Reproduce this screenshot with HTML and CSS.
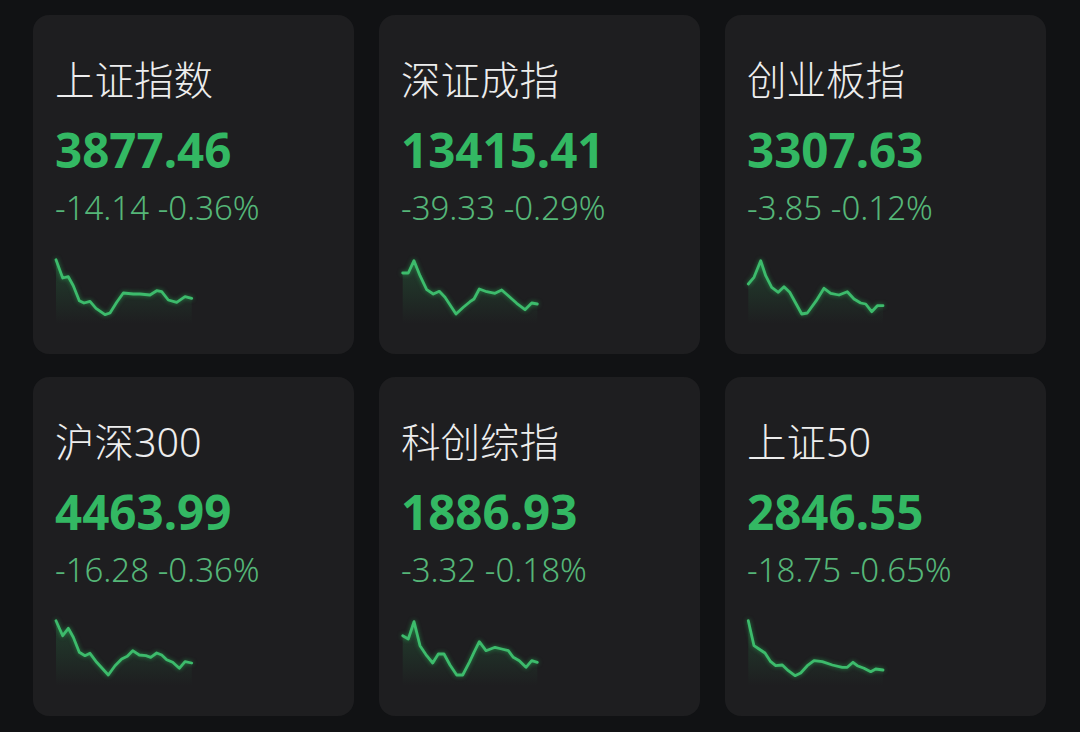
FILE: index.html
```html
<!DOCTYPE html>
<html lang="zh-CN">
<head>
  <meta charset="UTF-8">
  <title>指数行情</title>
  <link rel="stylesheet" href="styles.css">
</head>
<body>
  <div class="grid">

    <div class="card">
      <div class="name">上证指数</div>
      <div class="price">3877.46</div>
      <div class="change">-14.14 -0.36%</div>
      <svg class="spark" viewBox="0 0 150 75">
        <defs>
          <linearGradient id="g1" x1="0" y1="0" x2="0" y2="1">
            <stop offset="0" stop-color="#2fb35e" stop-opacity="0.22"/>
            <stop offset="1" stop-color="#2fb35e" stop-opacity="0"/>
          </linearGradient>
        </defs>
        <polygon fill="url(#g1)" points="1,10.7 7.7,29 13.3,27.7 18.3,36.7 24.3,51.7 29,54 35,52.3 41,59.3 50,65.7 55,64 61.7,53.3 68.3,44 78.3,45 85,45 95,46 101.7,41.7 106.7,42.7 113.3,51 121.7,53.3 130,47.7 136.7,49.3 136.7,75 1,75"/>
        <polyline class="line" points="1,10.7 7.7,29 13.3,27.7 18.3,36.7 24.3,51.7 29,54 35,52.3 41,59.3 50,65.7 55,64 61.7,53.3 68.3,44 78.3,45 85,45 95,46 101.7,41.7 106.7,42.7 113.3,51 121.7,53.3 130,47.7 136.7,49.3"/>
      </svg>
    </div>

    <div class="card">
      <div class="name">深证成指</div>
      <div class="price">13415.41</div>
      <div class="change">-39.33 -0.29%</div>
      <svg class="spark" viewBox="0 0 150 75">
        <defs>
          <linearGradient id="g2" x1="0" y1="0" x2="0" y2="1">
            <stop offset="0" stop-color="#2fb35e" stop-opacity="0.22"/>
            <stop offset="1" stop-color="#2fb35e" stop-opacity="0"/>
          </linearGradient>
        </defs>
        <polygon fill="url(#g2)" points="1.7,24 7.3,24 13,11.7 19,26.7 25.7,40.7 32.3,45 38.3,42.3 44,48.3 55,65 62.3,58.3 69,52.7 73,50 78.3,40 85.7,42.7 94,44.3 100.7,41 107.3,46.7 115.7,54.3 124,60.7 130.7,54 136.3,55 136.3,75 1.7,75"/>
        <polyline class="line" points="1.7,24 7.3,24 13,11.7 19,26.7 25.7,40.7 32.3,45 38.3,42.3 44,48.3 55,65 62.3,58.3 69,52.7 73,50 78.3,40 85.7,42.7 94,44.3 100.7,41 107.3,46.7 115.7,54.3 124,60.7 130.7,54 136.3,55"/>
      </svg>
    </div>

    <div class="card">
      <div class="name">创业板指</div>
      <div class="price">3307.63</div>
      <div class="change">-3.85 -0.12%</div>
      <svg class="spark" viewBox="0 0 150 75">
        <defs>
          <linearGradient id="g3" x1="0" y1="0" x2="0" y2="1">
            <stop offset="0" stop-color="#2fb35e" stop-opacity="0.22"/>
            <stop offset="1" stop-color="#2fb35e" stop-opacity="0"/>
          </linearGradient>
        </defs>
        <polygon fill="url(#g3)" points="1.3,35 7,28.3 13.7,11.7 18.7,26.7 24.7,38.3 31.3,43.3 37,37.7 42.7,43.3 54.7,65 60.3,64 69.3,51.7 77,39.3 83.7,44.3 92,46 100.3,42.7 107,50 113.7,54 118.7,55 124.7,62.7 130.3,56.7 136,56.7 136,75 1.3,75"/>
        <polyline class="line" points="1.3,35 7,28.3 13.7,11.7 18.7,26.7 24.7,38.3 31.3,43.3 37,37.7 42.7,43.3 54.7,65 60.3,64 69.3,51.7 77,39.3 83.7,44.3 92,46 100.3,42.7 107,50 113.7,54 118.7,55 124.7,62.7 130.3,56.7 136,56.7"/>
      </svg>
    </div>

    <div class="card">
      <div class="name">沪深300</div>
      <div class="price">4463.99</div>
      <div class="change">-16.28 -0.36%</div>
      <svg class="spark" viewBox="0 0 150 75">
        <defs>
          <linearGradient id="g4" x1="0" y1="0" x2="0" y2="1">
            <stop offset="0" stop-color="#2fb35e" stop-opacity="0.22"/>
            <stop offset="1" stop-color="#2fb35e" stop-opacity="0"/>
          </linearGradient>
        </defs>
        <polygon fill="url(#g4)" points="1,9.7 7.7,24.7 13.3,17.3 18.3,26.3 24.3,41.3 30,44.7 35,42.3 41.7,51.3 53.3,64 60,54.7 66.7,48 72.3,45.3 77.7,39.7 84.3,44 91,44.7 95.7,46.3 101.7,42 106.7,44 111.7,48.7 117.7,51.3 124.3,57.3 130,50.7 136.7,52 136.7,75 1,75"/>
        <polyline class="line" points="1,9.7 7.7,24.7 13.3,17.3 18.3,26.3 24.3,41.3 30,44.7 35,42.3 41.7,51.3 53.3,64 60,54.7 66.7,48 72.3,45.3 77.7,39.7 84.3,44 91,44.7 95.7,46.3 101.7,42 106.7,44 111.7,48.7 117.7,51.3 124.3,57.3 130,50.7 136.7,52"/>
      </svg>
    </div>

    <div class="card">
      <div class="name">科创综指</div>
      <div class="price">1886.93</div>
      <div class="change">-3.32 -0.18%</div>
      <svg class="spark" viewBox="0 0 150 75">
        <defs>
          <linearGradient id="g5" x1="0" y1="0" x2="0" y2="1">
            <stop offset="0" stop-color="#2fb35e" stop-opacity="0.22"/>
            <stop offset="1" stop-color="#2fb35e" stop-opacity="0"/>
          </linearGradient>
        </defs>
        <polygon fill="url(#g5)" points="1.7,24.7 7.3,28 13,10.7 19,34.7 25.7,44.7 31.7,52 37.3,43 43,43 49,54 55.7,64 61.7,64 68.3,51.3 73,41.3 78.3,30.7 85,39.7 94,36.3 100.7,38 107.3,39.7 112.3,46.3 118.3,49.7 125,56.3 130.7,49.7 136.3,51.3 136.3,75 1.7,75"/>
        <polyline class="line" points="1.7,24.7 7.3,28 13,10.7 19,34.7 25.7,44.7 31.7,52 37.3,43 43,43 49,54 55.7,64 61.7,64 68.3,51.3 73,41.3 78.3,30.7 85,39.7 94,36.3 100.7,38 107.3,39.7 112.3,46.3 118.3,49.7 125,56.3 130.7,49.7 136.3,51.3"/>
      </svg>
    </div>

    <div class="card">
      <div class="name">上证50</div>
      <div class="price">2846.55</div>
      <div class="change">-18.75 -0.65%</div>
      <svg class="spark" viewBox="0 0 150 75">
        <defs>
          <linearGradient id="g6" x1="0" y1="0" x2="0" y2="1">
            <stop offset="0" stop-color="#2fb35e" stop-opacity="0.22"/>
            <stop offset="1" stop-color="#2fb35e" stop-opacity="0"/>
          </linearGradient>
        </defs>
        <polygon fill="url(#g6)" points="1.3,9.7 7,34.7 12,38 18,42 23.7,50.7 28.7,54.7 35.3,54 41.3,59.7 48,64.7 53.7,62 60.3,54.7 67,49.7 75.3,50.7 85.3,54 95.3,56.3 100.3,56.3 106,51.3 110.3,54.7 117,57.3 123.7,60.7 128.7,58 136,59 136,75 1.3,75"/>
        <polyline class="line" points="1.3,9.7 7,34.7 12,38 18,42 23.7,50.7 28.7,54.7 35.3,54 41.3,59.7 48,64.7 53.7,62 60.3,54.7 67,49.7 75.3,50.7 85.3,54 95.3,56.3 100.3,56.3 106,51.3 110.3,54.7 117,57.3 123.7,60.7 128.7,58 136,59"/>
      </svg>
    </div>

  </div>
</body>
</html>
```

FILE: styles.css
```css
body {
  margin: 0;
  background: #111214;
  font-family: 'Noto Sans', 'Noto Sans CJK SC', sans-serif;
  height: 732px;
  overflow: hidden;
}

.grid {
  display: grid;
  grid-template-columns: repeat(3, 321px);
  grid-template-rows: repeat(2, 339px);
  column-gap: 25px;
  row-gap: 23px;
  padding: 15px 0 0 33px;
}

.card {
  background: #1e1e20;
  border-radius: 16px;
  padding: 42px 22px 0;
  display: flex;
  flex-direction: column;
  box-sizing: border-box;
}

.name {
  font-family: 'Noto Sans', 'Noto Sans CJK SC', sans-serif;
  font-size: 39.5px;
  font-weight: 300;
  line-height: 46px;
  color: #ededed;
}

.price {
  margin-top: 20px;
  font-size: 47.5px;
  line-height: 54px;
  font-weight: 700;
  color: #33b863;
}

.change {
  margin-top: 10px;
  font-size: 33px;
  font-weight: 300;
  line-height: 42px;
  color: #55b678;
}

.spark {
  margin-top: 20px;
  width: 150px;
  height: 75px;
  overflow: visible;
}

.line {
  fill: none;
  stroke: #3dbb6c;
  stroke-width: 2.8;
  stroke-linejoin: round;
  stroke-linecap: round;
  filter: drop-shadow(0 0 2px rgba(40, 190, 90, 0.6));
}
```
